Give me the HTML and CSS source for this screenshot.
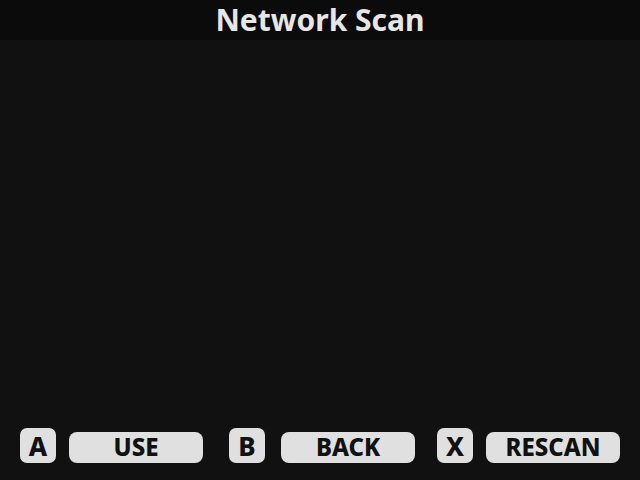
FILE: index.html
```html
<!DOCTYPE html>
<html>
<head>
<meta charset="utf-8">
<link rel="stylesheet" href="styles.css">
</head>
<body>
<div class="screen">
  <header class="header"><h1 class="title">Network Scan</h1></header>
  <main class="content"></main>
  <footer class="footer">
    <div class="action"><span class="key">A</span><span class="pill">USE</span></div>
    <div class="action action-wide"><span class="key">B</span><span class="pill">BACK</span></div>
    <div class="action action-last"><span class="key">X</span><span class="pill">RESCAN</span></div>
  </footer>
</div>
</body>
</html>
```

FILE: styles.css
```css
html, body {
  margin: 0;
  padding: 0;
  background: #111111;
}
.screen {
  width: 640px;
  height: 480px;
  display: flex;
  flex-direction: column;
  font-family: "Noto Sans", "DejaVu Sans", sans-serif;
}
.header {
  height: 40px;
  background: #0b0b0b;
  display: flex;
  align-items: center;
  justify-content: center;
}
.title {
  margin: 0;
  color: #e6e6e6;
  font-size: 30px;
  font-weight: 700;
  line-height: 40px;
}
.content {
  flex: 1;
}
.footer {
  display: flex;
  padding: 0 20px 17px 20px;
}
.action {
  display: flex;
  align-items: flex-end;
  gap: 13px;
}
.action-wide {
  gap: 16px;
  margin-left: 26px;
}
.action-last {
  margin-left: 22px;
}
.key {
  width: 36px;
  height: 35px;
  border-radius: 7px;
  background: #e0e0e0;
  color: #111111;
  font-weight: 800;
  font-size: 26px;
  line-height: 1;
  display: flex;
  align-items: center;
  justify-content: center;
  box-sizing: border-box;
  padding-top: 1px;
}
.pill {
  width: 134px;
  height: 31px;
  border-radius: 8px;
  background: #e0e0e0;
  color: #111111;
  font-weight: 800;
  font-size: 24px;
  line-height: 1;
  display: flex;
  align-items: center;
  justify-content: center;
  box-sizing: border-box;
  padding-bottom: 2px;
}
```
